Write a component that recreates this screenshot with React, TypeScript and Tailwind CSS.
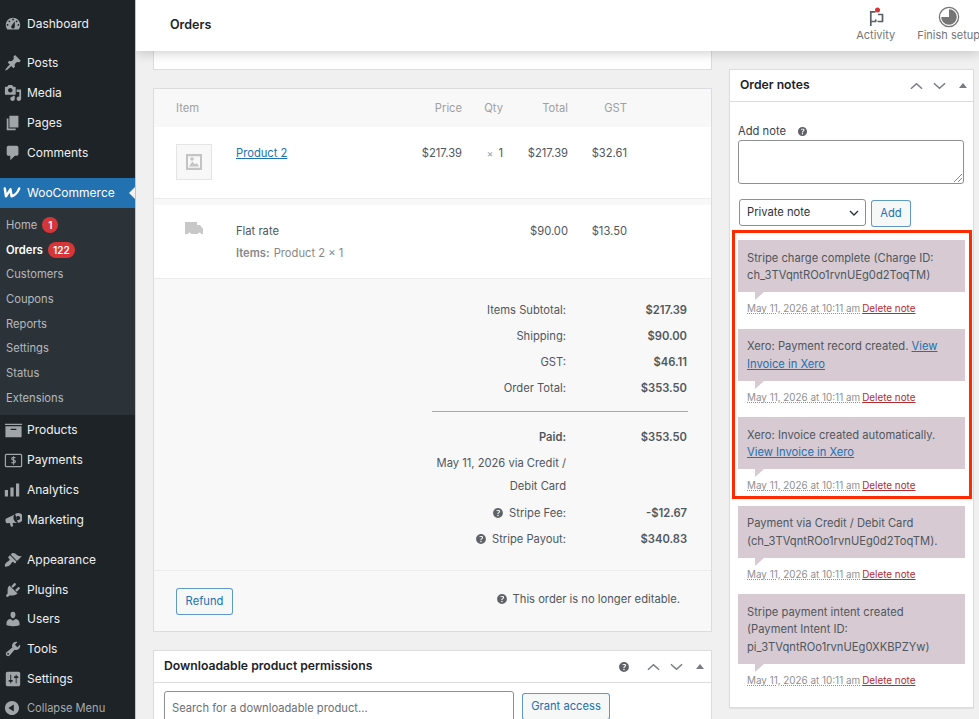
const Dash = ({ d, className = "w-5 h-5" }: { d: string; className?: string }) => (
  <svg viewBox="0 0 20 20" fill="currentColor" fillRule="evenodd" className={className}>
    <path d={d} />
  </svg>
);

const icons = {
  dashboard:
    "M3.76 16h12.48c1.1-1.37 1.76-3.11 1.76-5 0-4.42-3.58-8-8-8s-8 3.58-8 8c0 1.89.66 3.63 1.76 5zM10 4c.55 0 1 .45 1 1s-.45 1-1 1-1-.45-1-1 .45-1 1-1zM6 6c.55 0 1 .45 1 1s-.45 1-1 1-1-.45-1-1 .45-1 1-1zm8 0c.55 0 1 .45 1 1s-.45 1-1 1-1-.45-1-1 .45-1 1-1zm-5.37 5.55L12 7v6c0 1.1-.9 2-2 2s-2-.9-2-2c0-.57.24-1.08.63-1.45zM4 10c.55 0 1 .45 1 1s-.45 1-1 1-1-.45-1-1 .45-1 1-1zm12 0c.55 0 1 .45 1 1s-.45 1-1 1-1-.45-1-1 .45-1 1-1z",
  posts:
    "M10.44 3.02l1.82-1.82 6.36 6.35-1.83 1.82c-1.05-.68-2.48-.57-3.41.36l-.75.75c-.92.93-1.04 2.35-.35 3.41l-1.83 1.82-2.41-2.41-2.8 2.79c-.42.42-3.38 2.71-3.8 2.29s1.86-3.39 2.28-3.81l2.79-2.79L4.1 9.36l1.83-1.82c1.05.69 2.48.57 3.4-.36l.75-.75c.93-.92 1.05-2.35.36-3.41z",
  media:
    "M13 11V4c0-.55-.45-1-1-1h-1.67L9 1H5L3.67 3H2c-.55 0-1 .45-1 1v7c0 .55.45 1 1 1h10c.55 0 1-.45 1-1zM7 4.5c1.38 0 2.5 1.12 2.5 2.5S8.38 9.5 7 9.5 4.5 8.38 4.5 7 5.62 4.5 7 4.5zM14 6h5v10.5c0 1.38-1.12 2.5-2.5 2.5S14 17.88 14 16.5s1.12-2.5 2.5-2.5c.17 0 .34.02.5.05V9h-3V6zm-4 8.05V13h2v3.5c0 1.38-1.12 2.5-2.5 2.5S7 17.88 7 16.5 8.12 14 9.5 14c.17 0 .34.02.5.05z",
  pages: "M6 15V2h10v13H6zm-1 1h8v2H3V5h2v11z",
  comments: "M5 2h9c1.1 0 2 .9 2 2v7c0 1.1-.9 2-2 2h-2l-5 5v-5H5c-1.1 0-2-.9-2-2V4c0-1.1.9-2 2-2z",
  products: "M19 3v1.2H1V3h18zM1.5 5.5h17V17h-17V5.5zM13 8.2H7v1.4h6V8.2z",
  analytics: "M1 10h4v8H1v-8zm7-3h4v11H8V7zm7-5h4v16h-4V2z",
  marketing:
    "M2 8.5L12.5 3.5l3 9.5-6 .2.8 3.8-2.6.5-1.3-4.2-3.2.3C2 13.5 1 10 2 8.5zM14 2.6a5.4 5.4 0 1 1 2.6 10.4 5.4 5.4 0 0 1-2.6-10.4zm1.2 3a2.2 2.2 0 1 0 1.1 4.3 2.2 2.2 0 0 0-1.1-4.3z",
  appearance:
    "M14.48 11.06L7.41 3.99l1.5-1.5c.5-.56 2.3-.47 3.51.32 1.21.8 1.43 1.28 2.91 2.1 1.18.64 2.45 1.26 4.45.85zm-.71.71L6.7 4.7 4.93 6.47c-.39.39-.39 1.02 0 1.41l1.06 1.06c.39.39.39 1.03 0 1.42-.6.6-1.43 1.11-2.21 1.69-.35.26-.7.53-1.01.84C1.43 13.23.4 16.4 1.2 17.2c.8.8 3.97-.23 5.32-1.58.31-.31.58-.66.84-1.01.58-.78 1.09-1.61 1.69-2.21.39-.39 1.03-.39 1.42 0l1.06 1.06c.39.39 1.02.39 1.41 0z",
  plugins:
    "M13.11 4.36L9.87 7.6 8 5.73l3.24-3.24c.35-.34 1.05-.2 1.56.32.52.51.66 1.21.31 1.55zm-8 1.77l.91-1.12 9.01 9.01-1.19.84c-.71.71-2.63 1.16-3.82 1.16H6.14L4.9 17.26c-.59.59-1.54.59-2.12 0-.59-.58-.59-1.53 0-2.12l1.24-1.24v-3.88c0-1.13.4-3.19 1.09-3.89zm7.26 3.97l3.24-3.24c.34-.35 1.04-.21 1.55.31.52.51.66 1.21.31 1.55l-3.24 3.25z",
  users:
    "M10 9.25c-2.27 0-2.73-3.44-2.73-3.44C7 4.02 7.82 2 9.97 2c2.16 0 2.98 2.02 2.71 3.81 0 0-.41 3.44-2.68 3.44zm0 2.57L12.72 10c2.39 0 4.52 2.33 4.52 4.53v2.49s-3.65 1.13-7.24 1.13c-3.65 0-7.24-1.13-7.24-1.13v-2.49c0-2.25 1.94-4.48 4.47-4.48z",
  tools:
    "M16.68 9.77c-1.34 1.34-3.3 1.67-4.95.99l-5.41 6.52c-.99.99-2.59.99-3.58 0s-.99-2.59 0-3.57l6.52-5.42c-.68-1.65-.35-3.61.99-4.95 1.28-1.28 3.12-1.62 4.72-1.06l-2.89 2.89 2.82 2.82 2.86-2.87c.53 1.58.18 3.39-1.08 4.65zM3.81 16.21c.4.39 1.04.39 1.43 0 .4-.4.4-1.04 0-1.43-.39-.4-1.03-.4-1.43 0-.39.39-.39 1.03 0 1.43z",
  settings:
    "M18 16V4c0-1.1-.9-2-2-2H4c-1.1 0-2 .9-2 2v12c0 1.1.9 2 2 2h12c1.1 0 2-.9 2-2zM8 11h1c.55 0 1 .45 1 1s-.45 1-1 1H8v1.5c0 .28-.22.5-.5.5s-.5-.22-.5-.5V13H6c-.55 0-1-.45-1-1s.45-1 1-1h1V5.5c0-.28.22-.5.5-.5s.5.22.5.5V11zm5-2h-1c-.55 0-1-.45-1-1s.45-1 1-1h1V5.5c0-.28.22-.5.5-.5s.5.22.5.5V7h1c.55 0 1 .45 1 1s-.45 1-1 1h-1v5.5c0 .28-.22.5-.5.5s-.5-.22-.5-.5V9z",
  collapse: "M10 2.16c4.33 0 7.84 3.51 7.84 7.84s-3.51 7.84-7.84 7.84-7.84-3.51-7.84-7.84S5.67 2.16 10 2.16zM12 14V6l-6 4z",
  help:
    "M17 10c0-3.87-3.14-7-7-7-3.87 0-7 3.13-7 7s3.13 7 7 7c3.86 0 7-3.13 7-7zm-6.3 1.48H9.14v-.43c0-.38.08-.7.24-.98s.46-.57.88-.89c.41-.29.68-.53.81-.71.14-.18.2-.39.2-.62 0-.25-.09-.44-.28-.58-.19-.13-.45-.19-.79-.19-.58 0-1.25.19-2 .57l-.64-1.28c.87-.49 1.8-.74 2.77-.74.81 0 1.45.2 1.92.58.48.39.71.91.71 1.55 0 .43-.09.8-.29 1.11-.19.32-.57.67-1.11 1.06-.38.28-.61.49-.71.63-.1.15-.15.34-.15.57v.35zm-1.47 2.74c-.18-.17-.27-.42-.27-.73 0-.33.08-.58.26-.75s.43-.25.77-.25c.32 0 .57.09.75.26s.27.42.27.74c0 .3-.09.55-.27.72-.18.18-.43.27-.75.27-.33 0-.58-.09-.76-.26z",
};

const PaymentsIcon = () => (
  <svg viewBox="0 0 20 20" fill="none" stroke="currentColor" className="w-[19px] h-[19px]">
    <rect x="1.5" y="3.5" width="17" height="13" rx="1" strokeWidth="1.3" />
    <path d="M12 7.4c-.5-.6-1.2-.8-2-.8-1.1 0-1.9.6-1.9 1.5 0 2 3.9 1 3.9 3 0 .9-.9 1.5-2 1.5-.9 0-1.6-.3-2.1-.9M10 5.5v9" strokeWidth="1.2" />
  </svg>
);

// woo mark, stroked so the W keeps its counters at this size
const WooIcon = () => (
  <svg viewBox="0 0 20 12" fill="none" stroke="white" strokeWidth="2.700" strokeLinecap="round" strokeLinejoin="round" className="w-[18px] h-[11px]">
    <path d="M2 1.500L3.300 10.300 8.300 2.500 9.500 10.300C12.500 9.500 16.500 6 18 1.500" />
  </svg>
);

const NavItem = ({ icon, label, compact }: { icon: React.ReactNode; label: string; compact?: boolean }) => (
  <div className={`flex items-center text-[#f0f0f1] ${compact ? "h-[29.7px]" : "h-[30px]"}`}>
    <span className="w-[27px] pl-[4px] flex items-center text-[#a0a5aa]">{icon}</span>
    <span>{label}</span>
  </div>
);

const SubItem = ({ label, badge, bold }: { label: string; badge?: string; bold?: boolean }) => (
  <div className={`flex items-center h-[24.7px] pl-[6px] text-[11.2px] ${bold ? "font-semibold text-white" : "text-[#b4b9be]"}`}>
    <span>{label}</span>
    {badge && (
      <span className="ml-[5px] h-[16px] min-w-[16px] px-[5px] rounded-full bg-[#d63638] text-white text-[10px] font-semibold flex items-center justify-center leading-none">
        {badge}
      </span>
    )}
  </div>
);

const navIcon = "w-[18px] h-[18px]";

const Sidebar = () => (
  <aside className="w-[136px] shrink-0 h-[719px] bg-[#1d2327] border-r border-[#c3c4c7] overflow-hidden text-[12px] pt-[9px]">
    <NavItem icon={<Dash d={icons.dashboard} className={navIcon} />} label="Dashboard" />
    <div className="h-[9px]" />
    <NavItem icon={<Dash d={icons.posts} className={navIcon} />} label="Posts" />
    <NavItem icon={<Dash d={icons.media} className={navIcon} />} label="Media" />
    <NavItem icon={<Dash d={icons.pages} className={navIcon} />} label="Pages" />
    <NavItem icon={<Dash d={icons.comments} className={navIcon} />} label="Comments" />
    <div className="h-[10px]" />
    <div className="relative flex items-center h-[29.5px] bg-[#2271b1] text-white">
      <span className="w-[27px] pl-[3px] flex items-center"><WooIcon /></span>
      <span>WooCommerce</span>
      <span className="absolute right-0 top-[9px] border-y-[6px] border-y-transparent border-r-[6px] border-r-[#f0f0f1]" />
    </div>
    <div className="bg-[#2c3338] pt-[5.500px] pb-[4.500px]">
      <SubItem label="Home" badge="1" />
      <SubItem label="Orders" badge="122" bold />
      <SubItem label="Customers" />
      <SubItem label="Coupons" />
      <SubItem label="Reports" />
      <SubItem label="Settings" />
      <SubItem label="Status" />
      <SubItem label="Extensions" />
    </div>
    <NavItem icon={<Dash d={icons.products} className="w-[19px] h-[19px]" />} label="Products" />
    <NavItem icon={<PaymentsIcon />} label="Payments" />
    <NavItem icon={<Dash d={icons.analytics} className="w-[16px] h-[16px]" />} label="Analytics" />
    <NavItem icon={<Dash d={icons.marketing} className={navIcon} />} label="Marketing" />
    <div className="h-[10px]" />
    <NavItem compact icon={<Dash d={icons.appearance} className={navIcon} />} label="Appearance" />
    <NavItem compact icon={<Dash d={icons.plugins} className={navIcon} />} label="Plugins" />
    <NavItem compact icon={<Dash d={icons.users} className={navIcon} />} label="Users" />
    <NavItem compact icon={<Dash d={icons.tools} className={navIcon} />} label="Tools" />
    <NavItem compact icon={<Dash d={icons.settings} className={navIcon} />} label="Settings" />
    <div className="flex items-center h-[29.7px] text-[#a7aaad] text-[11.1px]">
      <span className="w-[27px] pl-[3px] flex items-center text-[#a0a5aa]"><Dash d={icons.collapse} className={navIcon} /></span>
      <span>Collapse Menu</span>
    </div>
  </aside>
);

const ActivityIcon = () => (
  <svg viewBox="0 0 22 22" className="w-[22px] h-[22px]" fill="none" stroke="#5a5f66" strokeWidth="1.700">
    <path d="M5.800 20V5.800H10.500M5.800 15.500H10.500l.5-2M13 8.500H17.500V15.500H12.500" />
    <circle cx="12.500" cy="4" r="2.500" fill="#d63638" stroke="none" />
  </svg>
);

const SetupIcon = () => (
  <svg viewBox="0 0 24 24" className="w-[22px] h-[22px]">
    <circle cx="12" cy="12" r="10.500" fill="none" stroke="#757575" strokeWidth="1.400" />
    <path d="M12 3.500A8.500 8.500 0 1 1 3.500 12H12z" fill="#757575" />
  </svg>
);

const BoxControls = () => (
  <div className="flex items-center gap-[10px] text-[#787c82]">
    <svg viewBox="0 0 14 8" className="w-[13px] h-[8px]" fill="none" stroke="currentColor" strokeWidth="1.600"><path d="M1 7l6-5.500L13 7" /></svg>
    <svg viewBox="0 0 14 8" className="w-[13px] h-[8px]" fill="none" stroke="currentColor" strokeWidth="1.600"><path d="M1 1l6 5.500L13 1" /></svg>
    <span className="ml-[3px] border-x-[4px] border-x-transparent border-b-[5px] border-b-[#787c82]" />
  </div>
);

const Header = () => (
  <header className="relative z-10 h-[51px] shrink-0 bg-white shadow-[0_1px_12px_rgba(0,0,0,0.22)] flex items-center pl-[34px] overflow-hidden">
    <h1 className="text-[12.500px] font-semibold text-[#1d2327]">Orders</h1>
    <div className="ml-auto flex gap-[22px] text-[11px] leading-[13px] text-[#757575] pb-[4px] -mr-[1px]">
      <div className="flex flex-col items-center gap-[1px]"><ActivityIcon /><span>Activity</span></div>
      <div className="flex flex-col items-center gap-[1px] whitespace-nowrap"><SetupIcon /><span>Finish setup</span></div>
    </div>
  </header>
);

const OutlineButton = ({ label, className }: { label: string; className: string }) => (
  <button className={`border border-[#2271b1]/70 rounded-[3px] bg-[#f6f7f7] text-[#2271b1] text-[11.2px] flex items-center justify-center ${className}`}>
    {label}
  </button>
);

const HelpIcon = ({ className = "w-[14px] h-[14px]" }: { className?: string }) => (
  <span className="text-[#5f6368] inline-flex"><Dash d={icons.help} className={className} /></span>
);

const ColRow = ({ children, price, qty, total, gst, className }: { children: React.ReactNode; price?: React.ReactNode; qty?: React.ReactNode; total: string; gst: string; className: string }) => (
  <div className={`flex pl-[22px] pr-[84px] ${className}`}>
    <div className="flex-1">{children}</div>
    <div className="w-[70px] text-right">{price}</div>
    <div className="w-[41px] text-right">{qty}</div>
    <div className="w-[65px] text-right">{total}</div>
    <div className="w-[59px] text-right">{gst}</div>
  </div>
);

const TotalRow = ({ label, value, help, className = "h-[26px]" }: { label: string; value: string; help?: boolean; className?: string }) => (
  <div className={`flex items-center justify-end ${className}`}>
    {help && <span className="mr-[4px] flex"><HelpIcon /></span>}
    <span>{label}</span>
    <span className="w-[121px] text-right font-semibold">{value}</span>
  </div>
);

const ItemsBox = () => (
  <section className="mt-[18px] border border-[#dcdcde] bg-white text-[11.2px] text-[#50575e]">
    <ColRow className="h-[38px] items-center bg-[#f8f8f8] text-[#a0a0a0]" price="Price" qty="Qty" total="Total" gst="GST">
      Item
    </ColRow>
    <ColRow className="h-[72px] pt-[18px] border-b border-[#ececec]" price="$217.39" qty={<><span className="text-[#999] text-[10px] mr-[5px]">×</span>1</>} total="$217.39" gst="$32.61">
      <div className="flex">
        <div className="w-[36px] h-[36px] -mt-[1px] border border-[#e5e5e5] bg-[#f8f8f8] flex items-center justify-center text-[#c4c4c4]">
          <svg viewBox="0 0 20 20" className="w-[20px] h-[20px]" fill="currentColor" fillRule="evenodd">
            <path d="M2 2h16v16H2V2zm2 2.200v11.600h12V4.200H4zm1 10.300l3.300-5 2.700 3 1.800-1.500 2.200 3.500H5zM8 5.200a1.800 1.800 0 1 1 0 3.600 1.800 1.800 0 0 1 0-3.600z" />
          </svg>
        </div>
        <a className="ml-[24px] text-[#2271b1] underline leading-[17px]">Product 2</a>
      </div>
    </ColRow>
    <div className="h-[6px] bg-[#f8f8f8]" />
    <ColRow className="h-[74px] pt-[18px] border-b border-[#ececec]" total="$90.00" gst="$13.50">
      <div className="flex">
        <div className="w-[36px] flex justify-center text-[#c8c8c8]">
          <svg viewBox="0 0 18 14" className="w-[18px] h-[14px] mt-[-1px]" fill="currentColor">
            <path d="M0 0h12v3h3l3 4v5h-2a1.500 1.500 0 0 0-3 0H6a1.500 1.500 0 0 0-3 0H0V0z" />
          </svg>
        </div>
        <div className="ml-[24px]">
          <div>Flat rate</div>
          <div className="mt-[5px] text-[#888]"><b className="font-semibold">Items:</b> <span className="ml-[1px]">Product 2 × 1</span></div>
        </div>
      </div>
    </ColRow>
    <div className="bg-[#f8f8f8] pt-[18px] pr-[24px] pb-[18px] border-b border-[#ececec]">
      <TotalRow label="Items Subtotal:" value="$217.39" />
      <TotalRow label="Shipping:" value="$90.00" />
      <TotalRow label="GST:" value="$46.11" />
      <TotalRow label="Order Total:" value="$353.50" />
      <div className="ml-auto -mr-px mt-[10px] mb-[13px] w-[256px] h-px bg-[#a8a8a8]" />
      <TotalRow label="Paid:" value="$353.50" className="h-[25px] font-semibold" />
      <div className="flex justify-end mt-[2px] mb-[2px]">
        <div className="w-[134px] text-right leading-[23px]">May 11, 2026 via Credit / Debit Card</div>
        <div className="w-[121px]" />
      </div>
      <TotalRow label="Stripe Fee:" value="-$12.67" help />
      <TotalRow label="Stripe Payout:" value="$340.83" help />
    </div>
    <div className="bg-[#f8f8f8] h-[60px] pl-[22px] pr-[31px] flex items-center justify-between">
      <OutlineButton label="Refund" className="w-[57px] h-[27px]" />
      <div className="flex items-center gap-[4px] mt-[-3px]"><HelpIcon /><span>This order is no longer editable.</span></div>
    </div>
  </section>
);

const LeftColumn = () => (
  <div className="w-[559px] shrink-0">
    <div className="h-[19px] bg-white border border-t-0 border-[#dcdcde]" />
    <ItemsBox />
    <section className="mt-[18px] border border-[#dcdcde] bg-white">
      <div className="h-[32px] flex items-center pl-[10px] pr-[7px] border-b border-[#dcdcde]">
        <h2 className="text-[12.200px] font-semibold text-[#1d2327]">Downloadable product permissions</h2>
        <span className="ml-auto mr-[16px] flex"><HelpIcon /></span>
        <BoxControls />
      </div>
      <div className="flex items-start pl-[10px] pt-[8px] pb-[12px]">
        <div className="w-[350px] h-[34px] border border-[#8c8f94] rounded-[3px] px-[7px] flex items-center text-[11.2px] text-[#6b6f75]">
          Search for a downloadable product…
        </div>
        <OutlineButton label="Grant access" className="ml-[8px] mt-[2px] w-[88px] h-[27px]" />
      </div>
    </section>
  </div>
);

const Note = ({ children }: { children: React.ReactNode }) => (
  <li className="mb-[13.500px]">
    <div className="relative bg-[#d7cad2] pl-[9px] pr-[20px] pt-[9.500px] pb-[7.500px] text-[11.2px] leading-[17.500px] text-[#50575e] break-words">
      {children}
      <span className="absolute left-[17px] top-full border-r-[9px] border-r-transparent border-t-[8px] border-t-[#d7cad2]" />
    </div>
    <div className="mt-[9px] pl-[9px] text-[9.900px] leading-[14px] whitespace-nowrap">
      <span className="text-[#909090] underline decoration-dotted">May 11, 2026 at 10:11 am</span>
      <a className="ml-[2px] text-[#b32d2e] underline">Delete note</a>
    </div>
  </li>
);

const XeroLink = ({ children }: { children: React.ReactNode }) => <a className="text-[#2271b1] underline">{children}</a>;

const RightColumn = () => (
  <div className="relative w-[245px] ml-[17px] shrink-0 pt-[18px]">
    <section className="border border-[#dcdcde] bg-white pb-[7px] shadow-[0_1px_1px_rgba(0,0,0,0.06)]">
      <div className="h-[32px] flex items-center justify-between pl-[10px] pr-[6px] border-b border-[#dcdcde]">
        <h2 className="text-[12.200px] font-semibold text-[#1d2327]">Order notes</h2>
        <BoxControls />
      </div>
      <div className="px-[8px] pt-[22px]">
        <div className="flex items-center text-[11.2px] text-[#3c434a] leading-[15px]">
          Add note <span className="ml-[10px] flex"><HelpIcon className="w-[13px] h-[13px]" /></span>
        </div>
        <div className="relative mt-[1px] h-[44px] w-[226px] border border-[#8c8f94] rounded-[3px]">
          <svg viewBox="0 0 8 8" className="absolute right-[1px] bottom-[1px] w-[8px] h-[8px]" stroke="#888" fill="none"><path d="M0 8l8-8M4 8l4-4" /></svg>
        </div>
        <div className="flex items-start mt-[15px]">
          <div className="ml-[1px] w-[127px] h-[27px] border border-[#8c8f94] rounded-[3px] flex items-center justify-between pl-[7px] pr-[6px] text-[11.2px] text-[#2c3338]">
            Private note
            <svg viewBox="0 0 10 6" className="w-[10px] h-[6px]" fill="none" stroke="#2c3338" strokeWidth="1.400"><path d="M1 1l4 4 4-4" /></svg>
          </div>
          <OutlineButton label="Add" className="ml-[5px] mt-[1px] w-[40px] h-[27px]" />
        </div>
        <ul className="mt-[13px]">
          <Note>Stripe charge complete (Charge ID: ch_3TVqntROo1rvnUEg0d2ToqTM)</Note>
          <Note>Xero: Payment record created. <XeroLink>View Invoice in Xero</XeroLink></Note>
          <Note>Xero: Invoice created automatically. <XeroLink>View Invoice in Xero</XeroLink></Note>
          <Note>Payment via Credit / Debit Card (ch_3TVqntROo1rvnUEg0d2ToqTM).</Note>
          <Note>Stripe payment intent created (Payment Intent ID: pi_3TVqntROo1rvnUEg0XKBPZYw)</Note>
        </ul>
      </div>
    </section>
    <div className="absolute left-[3px] top-[179px] w-[240px] h-[269px] border-[3px] border-[#ff2a00]" />
  </div>
);

export default function App() {
  return (
    <div className="flex w-[979px] h-[719px] overflow-hidden bg-[#f0f0f1] [font-family:Inter,'Noto_Sans',sans-serif]">
      <Sidebar />
      <main className="flex-1 min-w-0 flex flex-col overflow-hidden">
        <Header />
        <div className="flex pl-[17px]">
          <LeftColumn />
          <RightColumn />
        </div>
      </main>
    </div>
  );
}
